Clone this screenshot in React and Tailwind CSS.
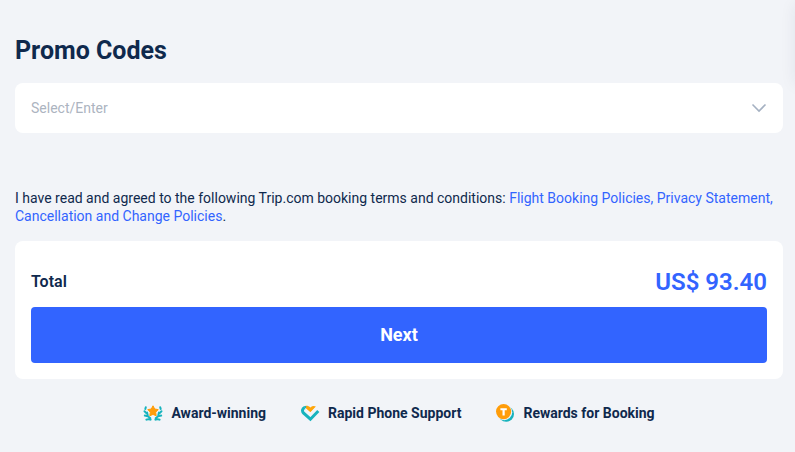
import React from 'react';

function ChevronIcon() {
  return (
    <svg className="w-4 h-4" viewBox="0 0 16 16" fill="none" stroke="#a5b1c2" strokeWidth="1.6">
      <path d="M1.5 4.5L8 11l6.5-6.5" />
    </svg>
  );
}

function AwardIcon() {
  return (
    <svg className="w-5 h-5" viewBox="0 0 20 20" fill="none">
      <path
        d="M10 2.8l1.7 3.2 3.5.6-2.5 2.6.5 3.6L10 11.4l-3.2 1.4.5-3.6-2.5-2.6 3.5-.6z"
        fill="#ff9d0a"
        stroke="#ff9d0a"
        strokeLinejoin="round"
        strokeWidth="1"
      />
      <g stroke="#17b3bd" strokeWidth="2" strokeLinecap="round">
        <path d="M2.8 4.2L2.3 6M1.5 8.2l1.8 1.7M1.8 12.6l3 .6M4.1 9.6l.6 2.6M3.4 16.6c1.4-.7 2.9-.5 4.2.1M5.2 13.4l2.2 1.8" />
        <path d="M17.2 4.2l.5 1.8M18.5 8.2l-1.8 1.7M18.2 12.6l-3 .6M15.9 9.6l-.6 2.6M16.6 16.6c-1.4-.7-2.9-.5-4.2.1M14.8 13.4l-2.2 1.8" />
      </g>
    </svg>
  );
}

function SupportIcon() {
  return (
    <svg className="w-5 h-5" viewBox="0 0 20 20" fill="none">
      <path d="M5.2 3C7 2.4 8.9 3 10.4 4.4c1.7-1.6 3.7-1.9 5.5-.9l-5.5 5.7L5 4.4z" fill="#ffa60a" />
      <path
        d="M6 4.7C3.6 4.1 1.9 6.6 2.7 8.7c.2.6.6 1 1 1.5l6.7 6 7.9-8.2"
        stroke="#17b3bd"
        strokeWidth="3"
      />
      <path d="M4.8 5l5.6 5.2L16.2 4.4" stroke="#f2f4f8" strokeWidth="0.8" />
    </svg>
  );
}

function RewardsIcon() {
  return (
    <svg className="w-5 h-5" viewBox="0 0 20 20">
      <circle cx="11.2" cy="11" r="7.8" fill="#17b3bd" />
      <circle cx="9.2" cy="9.2" r="8" fill="#f2f4f8" />
      <circle cx="8.6" cy="8.6" r="7.6" fill="#ff9d0a" />
      <path d="M5.4 5.2h6.4v2H9.7v5.2H7.5V7.2H5.4z" fill="#fff" />
    </svg>
  );
}

const perks = [
  { label: 'Award-winning', Icon: AwardIcon },
  { label: 'Rapid Phone Support', Icon: SupportIcon },
  { label: 'Rewards for Booking', Icon: RewardsIcon },
];

function PromoCodes() {
  return (
    <section>
      <h2 className="text-[25px] leading-8 font-bold">
        <label htmlFor="promo">Promo Codes</label>
      </h2>
      <div className="mt-4 h-[50px] px-4 flex items-center bg-white rounded-lg">
        <input
          id="promo"
          type="text"
          placeholder="Select/Enter"
          className="flex-1 min-w-0 text-sm outline-none placeholder:text-[#acb4bf]"
        />
        <button type="button" aria-label="Show promo codes"><ChevronIcon /></button>
      </div>
    </section>
  );
}

export default function App() {
  return (
    <div className="relative min-h-screen overflow-hidden bg-[#f2f4f8] text-[#0f294d] font-['Roboto',sans-serif]">
      <main className="pl-[15px] pr-3 pt-[35px] pb-7">
        <PromoCodes />

        <p className="mt-14 text-sm leading-[18px]">
          I have read and agreed to the following Trip.com booking terms and conditions:{' '}
          <a href="#flight" className="text-[#3264ff]">Flight Booking Policies,</a>{' '}
          <a href="#privacy" className="text-[#3264ff]">Privacy Statement,</a>{' '}
          <a href="#change" className="text-[#3264ff]">Cancellation and Change Policies</a>.
        </p>

        <section className="mt-4 px-4 pt-6 pb-4 bg-white rounded-lg">
          <div className="pb-2 flex items-center justify-between">
            <span className="text-base leading-[34px] font-semibold">Total</span>
            <span className="text-2xl leading-[34px] font-semibold text-[#3264ff]">US$ 93.40</span>
          </div>
          <button type="button" className="w-full h-14 rounded bg-[#3264ff] text-white text-lg font-bold">
            Next
          </button>
        </section>

        <ul className="mt-6 flex justify-center gap-[34px]">
          {perks.map(({ label, Icon }) => (
            <li key={label} className="flex items-center gap-2 text-sm leading-5 font-bold">
              <Icon />
              {label}
            </li>
          ))}
        </ul>
      </main>

      {/* edge of the side panel */}
      <div className="absolute left-full top-0 w-10 h-20 shadow-[0_4px_16px_rgba(15,41,77,0.08)]" />
    </div>
  );
}
